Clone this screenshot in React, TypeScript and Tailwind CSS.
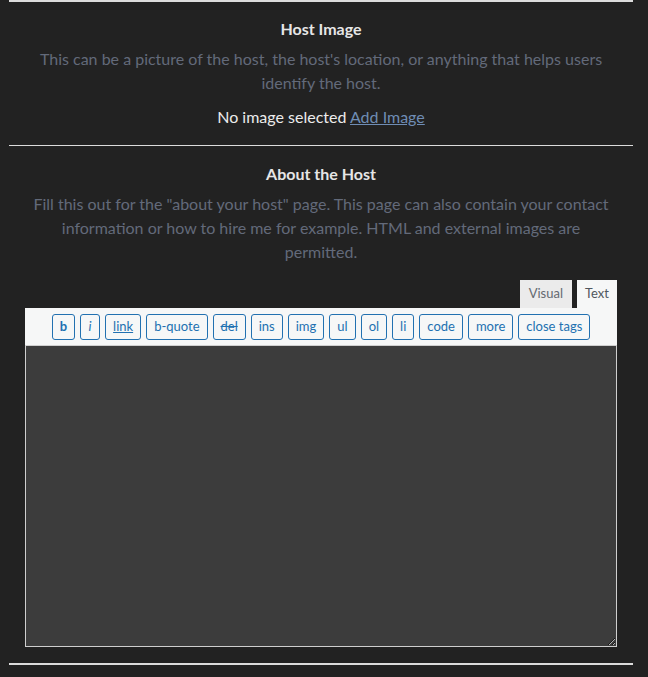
import React from 'react';

const QT_BUTTONS = ['b', 'i', 'link', 'b-quote', 'del', 'ins', 'img', 'ul', 'ol', 'li', 'code', 'more', 'close tags'];

function QtButton({ label }: { label: string }) {
  let extra = '';
  if (label === 'b') extra = 'font-bold';
  if (label === 'i') extra = 'italic';
  if (label === 'link') extra = 'underline';
  if (label === 'del') extra = 'line-through';
  return (
    <button
      type="button"
      className={`h-[26px] min-w-[20px] px-[7px] rounded-[3px] border border-[#2271b1] bg-[#f6f7f7] text-[#2271b1] text-[13px] leading-none ${extra}`}
    >
      {label}
    </button>
  );
}

export default function App() {
  return (
    <div
      className="w-[648px] h-[677px] bg-[#222222] overflow-hidden pl-[9px] pr-[15px]"
      style={{ fontFamily: 'Lato, "Noto Sans", sans-serif' }}
    >
      <hr className="border-0 h-[2px] bg-[#dcdcdc]" />

      {/* Host Image */}
      <div className="pt-[16px] pb-[16px] text-center">
        <h3 className="text-[16px] font-bold text-[#e6e6e6] leading-[22px]">Host Image</h3>
        <p className="mt-[7px] text-[16px] leading-[24px] text-[#636a7a] px-6">
          This can be a picture of the host, the host's location, or anything that helps users identify the host.
        </p>
        <p className="mt-[10px] text-[16px] leading-[24px] text-[#ececec]">
          No image selected <a href="#" className="text-[#6f8db5] underline">Add Image</a>
        </p>
      </div>

      <hr className="border-0 h-[1px] bg-[#dcdcdc]" />

      {/* About the Host */}
      <div className="pt-[17px] pb-[16px] text-center">
        <h3 className="text-[16px] font-bold text-[#e6e6e6] leading-[22px]">About the Host</h3>
        <p className="mt-[7px] text-[16px] leading-[24px] text-[#636a7a] px-4">
          Fill this out for the "about your host" page. This page can also contain your contact information or how to hire me for example. HTML and external images are permitted.
        </p>

        <div className="mt-[16px] mx-4 text-left">
          <div className="flex justify-end gap-[5px]">
            <button type="button" className="h-[28px] px-[9px] bg-[#ebebeb] text-[#646970] text-[13px]">
              Visual
            </button>
            <button type="button" className="h-[28px] px-[8px] bg-[#f6f7f7] text-[#50575e] text-[13px]">
              Text
            </button>
          </div>
          <div className="bg-[#f6f7f7] h-[37px] flex items-center justify-center gap-[5px]">
            {QT_BUTTONS.map((b) => (
              <QtButton key={b} label={b} />
            ))}
          </div>
          <textarea className="block w-full h-[302px] bg-[#3c3c3c] border border-[#cfcfcf] resize-y outline-none" />
        </div>
      </div>

      <hr className="border-0 h-[2px] bg-[#dcdcdc]" />
    </div>
  );
}
